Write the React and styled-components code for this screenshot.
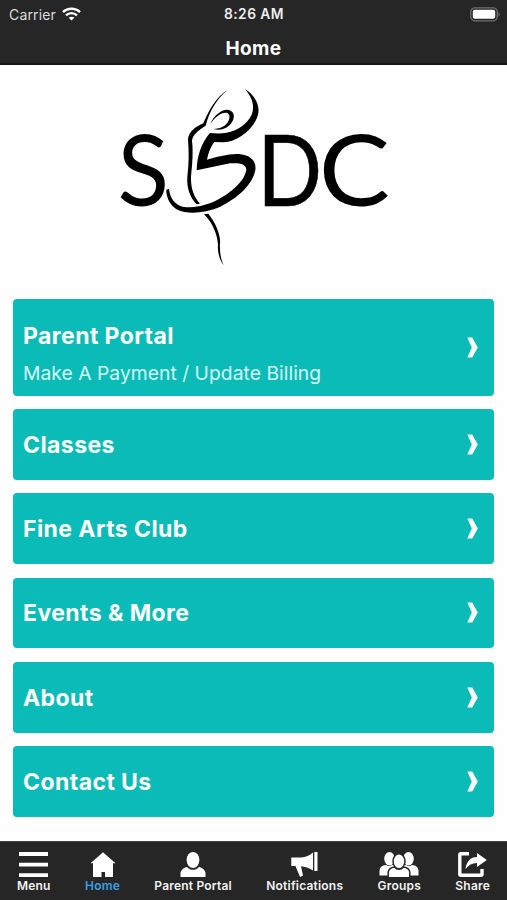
import styled, {createGlobalStyle} from "styled-components";

const GlobalStyle = createGlobalStyle`
  * {
    box-sizing: border-box;
  }
  body {
    margin: 0;
    background: white;
    font-family: Inter, "Liberation Sans", sans-serif;
  }
`;

const Container = styled.div`
  width: 507px;
  height: 900px;
  display: flex;
  flex-direction: column;
  overflow: hidden;
  background: #fefefe;
`;

const Header = styled.header`
  height: 65px;
  flex: none;
  background-color: #262626;
  border-bottom: 2px solid #151515;
  color: white;
`;

const StatusBar = styled.div`
  height: 28px;
  padding: 0 6px 0 9px;
  display: grid;
  grid-template-columns: 1fr auto 1fr;
  align-items: center;
`;

const Carrier = styled.div`
  display: flex;
  align-items: center;
  gap: 6px;
  font-size: 14px;
  letter-spacing: 0.15px;
  color: #dcdcdc;
`;

const Time = styled.div`
  margin-right: 2px;
  font-size: 13.8px;
  font-weight: 600;
  letter-spacing: 0.45px;
  color: #eeeeee;
`;

const Battery = styled.svg`
  justify-self: end;
`;

const Title = styled.h1`
  margin: 0;
  height: 40px;
  line-height: 41px;
  text-align: center;
  font-size: 19px;
  font-weight: 700;
  letter-spacing: 0.4px;
`;

const Banner = styled.div`
  height: 234px;
  flex: none;
  padding: 15px 0 0 110px;
`;

const LogoText = styled.text`
  font-family: Lato, sans-serif;
  font-size: 98px;
`;

const List = styled.main`
  flex: 1;
  padding: 0 13px 0 13px;
  display: flex;
  flex-direction: column;
  gap: 13.5px;
`;

const Card = styled.div`
  height: ${(props) => (props.$tall ? "96.5px" : "70.8px")};
  flex: none;
  padding: 0 16px 0 10px;
  display: flex;
  align-items: center;
  justify-content: space-between;
  border-radius: 4px;
  background-color: #0bbbb7;
  color: white;
`;

const CardTitle = styled.div`
  font-size: 23px;
  line-height: 30px;
  font-weight: 700;
  letter-spacing: 0.42px;
  white-space: nowrap;
  padding-top: 1px;
`;

const CardSubtitle = styled.div`
  margin-top: 9px;
  font-size: 19.3px;
  line-height: 26px;
  letter-spacing: 0.03px;
  color: #d5f8f7;
  white-space: nowrap;
`;

const CardText = styled.div`
  padding-top: ${(props) => (props.$tall ? "11px" : "0")};
`;

const TabBar = styled.nav`
  height: 59px;
  flex: none;
  padding: 10px 17px 0 17px;
  display: flex;
  justify-content: space-between;
  background-color: #262626;
  border-top: 1px solid #444444;
`;

const Tab = styled.div`
  display: flex;
  flex-direction: column;
  align-items: center;
  color: ${(props) => (props.$active ? "#3b9fe3" : "#f2f2f2")};
  font-size: 12px;
  line-height: 15px;
  font-weight: 600;
  letter-spacing: 0.2px;
  white-space: nowrap;

  svg {
    display: block;
    height: 26px;
    fill: white;
  }
`;

const WifiIcon = () => (
    <svg width="19" height="14" viewBox="0 0 19 14" fill="none" stroke="white" strokeWidth="2.4">
        <path d="M1 5.1 C5.6 0.6 13.4 0.6 18 5.1"/>
        <path d="M4 8.3 C7 5.4 12 5.4 15 8.3"/>
        <path d="M9.5 13.6 L6.6 10.8 C8.2 9.3 10.8 9.3 12.4 10.8Z" fill="white" stroke="none"/>
    </svg>
);

const Logo = () => (
    <svg width="290" height="190" viewBox="110 80 290 190">
        <LogoText transform="translate(117.5 205.5) scale(0.97 1)">S</LogoText>
        <LogoText transform="translate(257.2 205.5) scale(0.87 1)" stroke="black" strokeWidth="0.6">D</LogoText>
        <LogoText transform="translate(318.8 205.5) scale(1.09 1)">C</LogoText>
        <g transform="translate(110 80) scale(0.33333)">
            {/* raised arm and back */}
            <path d="M352 30 C318 51 295 94 280 130 C259 139 235 155 234 178 C237 215 237 250 232 290 C229 325 242 355 260 373 L270 371 C253 350 242 330 243 290 C247 250 250 215 246 182 C247 165 265 151 287 137 C298 95 318 60 352 30Z"/>
            {/* head */}
            <path d="M300 133 C311 108 332 89 352 89 C372 91 377 109 366 126 C355 144 332 154 311 147 C328 147 342 141 351 130 C361 116 362 101 349 98 C333 97 315 111 300 133Z"/>
            {/* skirt */}
            <path d="M405 27 C439 48 454 84 441 113 C425 153 380 185 340 187 L313 186 C302 200 294 220 291 239 C318 231 355 221 385 222 C418 224 440 240 436 270 C427 320 370 363 320 385 C280 400 230 403 202 389 C179 377 168 350 169 329 L177 326 C180 354 194 373 218 380 C256 386 291 375 320 361 C366 337 405 303 409 268 C408 251 388 248 360 250 L260 271 C261 228 274 188 300 159 C349 164 384 155 412 124 C438 95 434 61 405 27Z"/>
            {/* leg */}
            <path d="M282 403 L295 401 C316 427 333 465 330 490 C328 520 335 545 341 555 C328 540 322 515 324 495 C322 460 305 425 282 403Z"/>
        </g>
    </svg>
);

const Chevron = () => (
    <svg width="11" height="21" viewBox="0 0 11 21">
        <path d="M0.3 0.5 H5.2 L10.8 10.5 L5.2 20.5 H0.3 L4.8 10.5Z" fill="white"/>
    </svg>
);

const MenuIcon = () => (
    <svg width="29" height="26" viewBox="0 0 29 26">
        <path d="M0 0H29V4H0ZM0 10.7H29V14.5H0ZM0 21.3H29V25H0Z"/>
    </svg>
);

const HomeIcon = () => (
    <svg width="26" height="26" viewBox="0 0 26 26">
        <path d="M13 0.3 L25.5 11.3 H23 V25 H15 V20 H11.5 V25 H3 V11.3 H0.5Z"/>
    </svg>
);

const PersonIcon = () => (
    <svg width="26" height="26" viewBox="0 0 26 26">
        <ellipse cx="13" cy="8" rx="6.4" ry="8"/>
        <path d="M0.5 25 V21 C1 17.5 4 15.8 7 15 C10.5 18.8 15.5 18.8 19 15 C22 15.8 25 17.5 25.5 21 V25Z"/>
    </svg>
);

const MegaphoneIcon = () => (
    <svg width="27" height="26" viewBox="0 0 27 26">
        <path d="M0.3 5.5 H10 C15 5 18.5 3.5 22 0.5 V18.5 C18 16 14 14.5 10 14.2 L12 23.5 L9 25 L4.5 14 H0.3Z"/>
        <path d="M23.3 0 H26.5 V19 H23.3Z"/>
    </svg>
);

const GroupIcon = () => (
    <svg width="40" height="26" viewBox="0 0 40 26">
        <ellipse cx="10.5" cy="6.7" rx="5.3" ry="6.7"/>
        <ellipse cx="29.5" cy="6.7" rx="5.3" ry="6.7"/>
        <path d="M0.5 23.5 V18.5 C1 15 3 13.5 7 13 C9 14.5 11 14.5 13 13 L27 13 C29 14.5 31 14.5 33 13 C37 13.5 39 15 39.5 18.5 V23.5Z"/>
        <ellipse cx="20" cy="9.3" rx="6" ry="7.5" stroke="#262626" strokeWidth="1.5"/>
        <path d="M9.2 25.8 V20 C9.7 17 12 15.5 15.5 15 C18 18 22 18 24.5 15 C28 15.5 30.3 17 30.8 20 V25.8Z" stroke="#262626" strokeWidth="1.5"/>
    </svg>
);

const ShareIcon = () => (
    <svg width="29" height="26" viewBox="0 0 29 26">
        <path d="M11 1.8 H2.6 Q1.8 1.8 1.8 2.8 V22.3 Q1.8 23.2 2.8 23.2 H23 Q24 23.2 24 22.2 V17" fill="none" stroke="white" strokeWidth="3.4"/>
        <path d="M19 1 L28.8 8 L19 15 V11 C14 11 10.5 13 7.5 17 C8.5 9.5 12.5 5 19 5Z"/>
    </svg>
);

const cards = [
    {title: "Parent Portal", subtitle: "Make A Payment / Update Billing"},
    {title: "Classes"},
    {title: "Fine Arts Club"},
    {title: "Events & More"},
    {title: "About"},
    {title: "Contact Us"},
];

const tabs = [
    {label: "Menu", icon: <MenuIcon/>},
    {label: "Home", icon: <HomeIcon/>, active: true},
    {label: "Parent Portal", icon: <PersonIcon/>},
    {label: "Notifications", icon: <MegaphoneIcon/>},
    {label: "Groups", icon: <GroupIcon/>},
    {label: "Share", icon: <ShareIcon/>},
];

const App = () => {
    return (
        <Container>
            <GlobalStyle/>
            <Header>
                <StatusBar>
                    <Carrier>Carrier <WifiIcon/></Carrier>
                    <Time>8:26 AM</Time>
                    <Battery width="31" height="15" viewBox="0 0 31 15">
                        <rect x="0.8" y="0.8" width="26.4" height="13" rx="4" fill="none" stroke="#707070" strokeWidth="1.3"/>
                        <rect x="2.8" y="2.8" width="22.4" height="9" rx="2" fill="white"/>
                        <path d="M28.5 5 Q31 7.3 28.5 9.6Z" fill="#707070"/>
                    </Battery>
                </StatusBar>
                <Title>Home</Title>
            </Header>
            <Banner>
                <Logo/>
            </Banner>
            <List>
                {cards.map((card) => (
                    <Card key={card.title} $tall={!!card.subtitle}>
                        <CardText $tall={!!card.subtitle}>
                            <CardTitle>{card.title}</CardTitle>
                            {card.subtitle && <CardSubtitle>{card.subtitle}</CardSubtitle>}
                        </CardText>
                        <Chevron/>
                    </Card>
                ))}
            </List>
            <TabBar>
                {tabs.map((tab) => (
                    <Tab key={tab.label} $active={tab.active}>
                        {tab.icon}
                        {tab.label}
                    </Tab>
                ))}
            </TabBar>
        </Container>
    );
};

export default App;
